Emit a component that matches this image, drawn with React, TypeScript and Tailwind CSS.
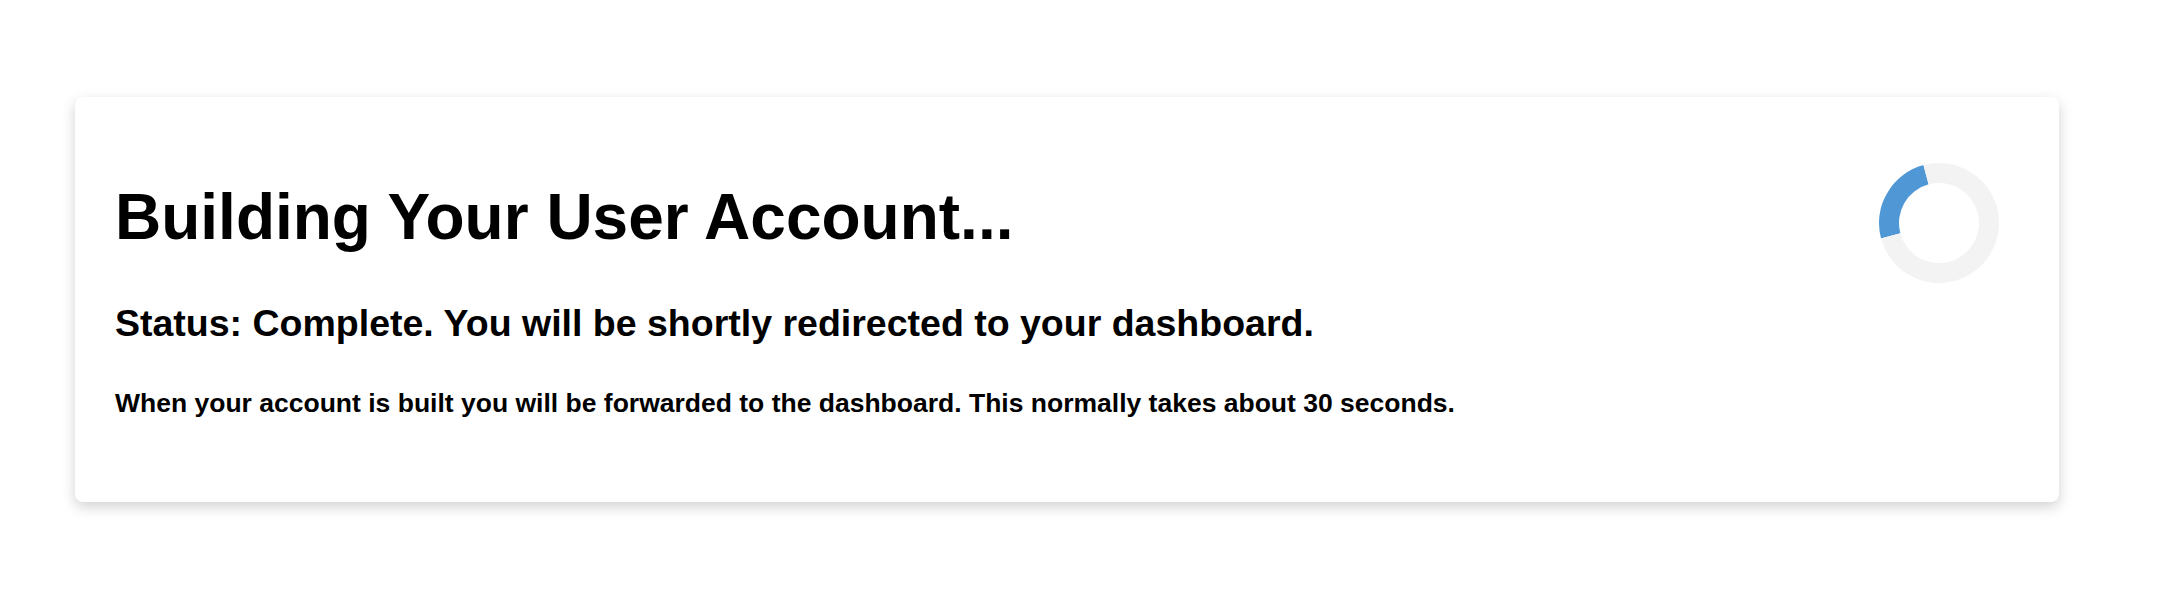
export default function App() {
  return (
    <div className="min-h-[615px] bg-white pt-[97px] pl-[75px] pr-[105px] font-['Liberation_Sans',Arial,sans-serif] text-black">
      <div className="flex h-[405px] items-start justify-between rounded-lg bg-white pl-[40px] pr-[60px] shadow-[0_5px_14px_rgba(0,0,0,0.18)]">
        <div className="pt-[88px]">
          <h1 className="text-[64px] font-bold leading-[64px]">Building Your User Account...</h1>
          <h2 className="mt-[56px] text-[37.5px] font-bold leading-[37.5px]">
            Status: Complete. You will be shortly redirected to your dashboard.
          </h2>
          <p className="mt-[47px] text-[26.5px] font-bold leading-[26.5px]">
            When your account is built you will be forwarded to the dashboard. This normally takes about 30 seconds.
          </p>
        </div>
        <div className="mt-[66px] h-[120px] w-[120px] shrink-0 rotate-[-60deg] rounded-full border-[20px] border-[#f3f3f3] border-t-[#4f98d5]" />
      </div>
    </div>
  );
}
